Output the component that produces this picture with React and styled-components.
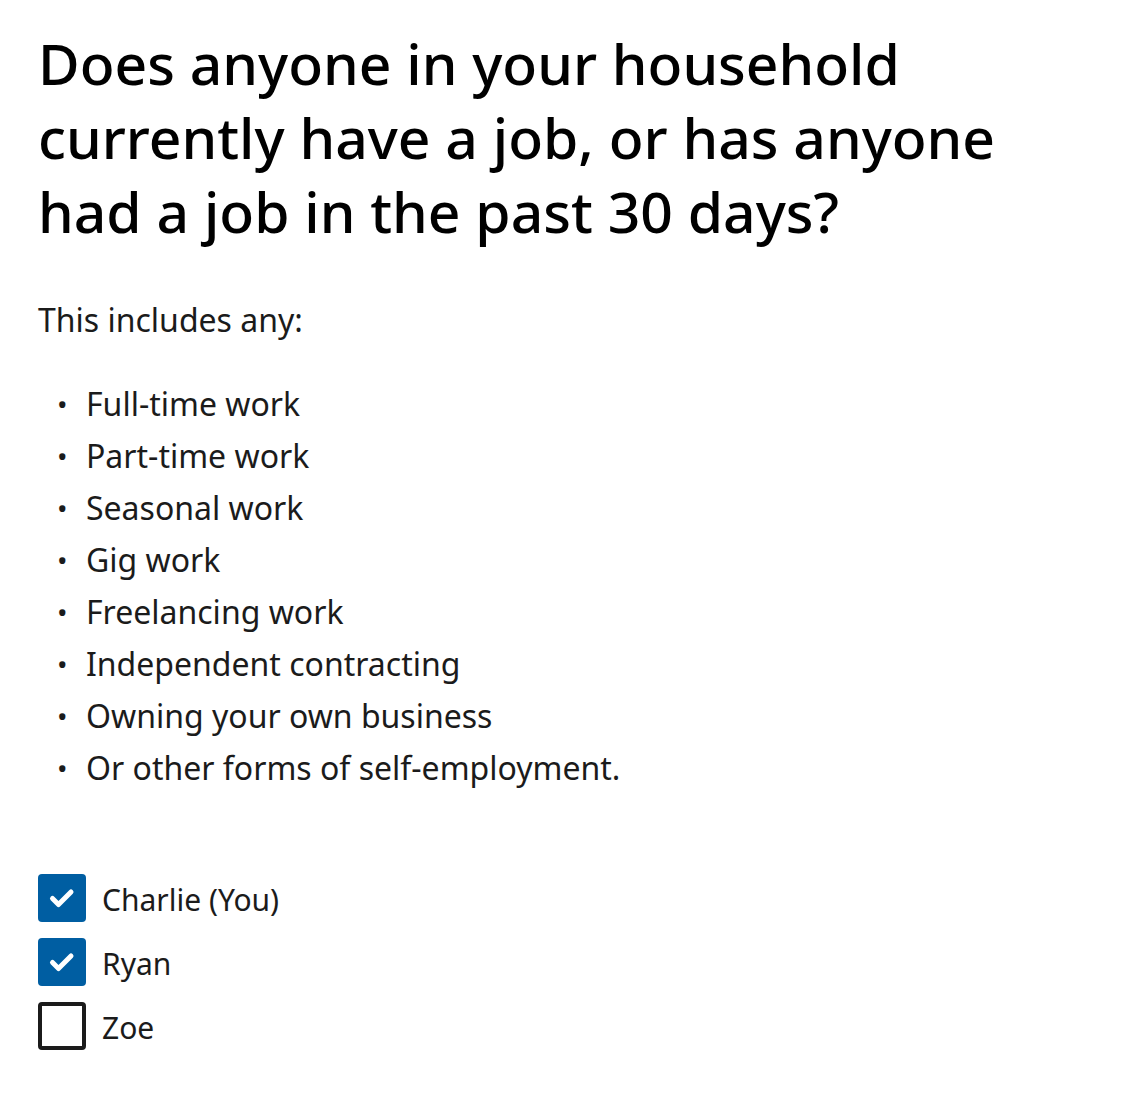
import React from 'react';
import styled, { createGlobalStyle } from 'styled-components';

const GlobalStyle = createGlobalStyle`
  body {
    margin: 0;
    background: #fff;
    font-family: "Noto Sans", "Open Sans", sans-serif;
    color: #1b1b1b;
  }
`;

const items = [
  'Full-time work',
  'Part-time work',
  'Seasonal work',
  'Gig work',
  'Freelancing work',
  'Independent contracting',
  'Owning your own business',
  'Or other forms of self-employment.',
];

const people = [
  { name: 'Charlie (You)', checked: true },
  { name: 'Ryan', checked: true },
  { name: 'Zoe', checked: false },
];

function App() {
  return (
    <Page>
      <GlobalStyle />
      <Title>
        Does anyone in your household currently have a job, or has anyone had a job in the past 30 days?
      </Title>
      <Intro>This includes any:</Intro>
      <List>
        {items.map((item) => (
          <Item key={item}>{item}</Item>
        ))}
      </List>
      <Fieldset>
        {people.map((p) => (
          <CheckRow key={p.name}>
            <Box checked={p.checked}>
              {p.checked && (
                <svg width="48" height="48" viewBox="0 0 48 48">
                  <path d="M14.5 24.5l6 6L33 18" fill="none" stroke="#fff" strokeWidth="5" strokeLinecap="round" strokeLinejoin="round" />
                </svg>
              )}
            </Box>
            <Label>{p.name}</Label>
          </CheckRow>
        ))}
      </Fieldset>
    </Page>
  );
}

const Page = styled.main`
  padding: 26px 38px 40px;
  max-width: 1000px;
`;

const Title = styled.h1`
  margin: 0;
  font-size: 57px;
  line-height: 74px;
  font-weight: 500;
  color: #000;
`;

const Intro = styled.p`
  margin: 50px 0 0;
  font-size: 32px;
  line-height: 44px;
`;

const List = styled.ul`
  margin: 36px 0 0;
  padding: 0;
  list-style: none;
  font-size: 32px;
  line-height: 52px;
`;

const Item = styled.li`
  position: relative;
  padding-left: 48px;

  &::before {
    content: '•';
    position: absolute;
    left: 19px;
    font-size: 28px;
  }
`;

const Fieldset = styled.div`
  margin-top: 80px;
  display: flex;
  flex-direction: column;
  gap: 16px;
`;

const CheckRow = styled.label`
  display: flex;
  align-items: center;
  gap: 16px;
`;

const Box = styled.span`
  flex-shrink: 0;
  width: 48px;
  height: 48px;
  box-sizing: border-box;
  border-radius: 4px;
  display: flex;
  align-items: center;
  justify-content: center;
  background: ${(p) => (p.checked ? '#005ea2' : '#fff')};
  border: ${(p) => (p.checked ? 'none' : '4px solid #1b1b1b')};
`;

const Label = styled.span`
  font-size: 30px;
  line-height: 44px;
  padding-top: 4px;
  color: #1b1b1b;
`;

export default App;
